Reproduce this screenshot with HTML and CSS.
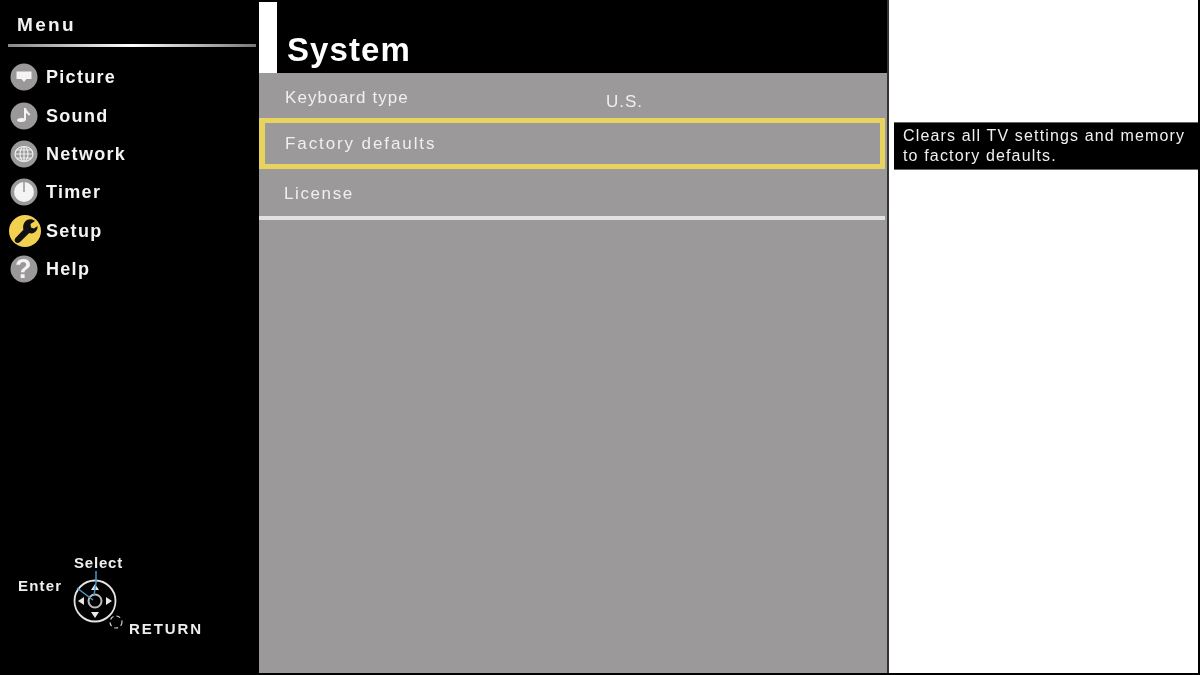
FILE: index.html
```html
<!DOCTYPE html>
<html lang="en">
<head>
  <meta charset="UTF-8">
  <title>Menu - System</title>
  <link rel="stylesheet" href="styles.css">
</head>
<body>

  <aside class="sidebar">
    <h2 class="menu-title">Menu</h2>
    <div class="menu-rule"></div>

    <nav class="menu">
      <div class="menu-item">
        <svg class="menu-icon" viewBox="0 0 34 34">
          <circle class="disc" cx="16" cy="17" r="13.5"/>
          <path class="glyph" d="M8.500 11.500h15v7.500h-5l-2.500 3-2.500-3h-5z"/>
        </svg>
        <span>Picture</span>
      </div>
      <div class="menu-item">
        <svg class="menu-icon" viewBox="0 0 34 34">
          <circle class="disc" cx="16" cy="17" r="13.500"/>
          <path class="glyph" d="M16 9h2c.4 2.500 2.500 4 4.500 6.500l-1.500 1.200c-1-1.300-2-2.200-3-2.700v6.500c0 1.600-2 2.500-4.300 2.500-2.300 0-4.700-.5-4.700-1.800s2.300-2.200 4.700-2.200c.9 0 1.700.1 2.300.4z"/>
        </svg>
        <span>Sound</span>
      </div>
      <div class="menu-item">
        <svg class="menu-icon" viewBox="0 0 34 34">
          <circle class="disc" cx="16" cy="17" r="13.500"/>
          <ellipse class="line" cx="16" cy="17" rx="9" ry="7.500"/>
          <ellipse class="line" cx="16" cy="17" rx="4" ry="7.500"/>
          <path class="line" d="M16 9.500v15M7 17h18M8.500 13h15M8.500 21h15"/>
        </svg>
        <span>Network</span>
      </div>
      <div class="menu-item">
        <svg class="menu-icon" viewBox="0 0 34 34">
          <circle class="disc" cx="16" cy="17" r="13.500"/>
          <circle class="glyph" cx="16" cy="17" r="10"/>
          <path class="hand" d="M16 7v10"/>
        </svg>
        <span>Timer</span>
      </div>
      <div class="menu-item current">
        <svg class="menu-icon" viewBox="0 0 34 34">
          <circle class="disc-on" cx="17" cy="17" r="16"/>
          <path class="wrench" d="M19 6c3-1.200 6-.6 8 1l-4.500 3 .5 3.500 3 1 3.500-2.500c.4 3-1 5.500-3.500 6.800-1.600.8-3.300.8-4.800.3L12 28c-1.500 1.300-3.500 1.200-4.600 0-1.100-1.300-1-3 .3-4.300l7.700-8c-.9-4 .6-8 3.600-9.700z"/>
        </svg>
        <span>Setup</span>
      </div>
      <div class="menu-item">
        <svg class="menu-icon" viewBox="0 0 34 34">
          <circle class="disc" cx="16" cy="17" r="13.500"/>
          <text class="help-mark" x="16" y="26" text-anchor="middle">?</text>
        </svg>
        <span>Help</span>
      </div>
    </nav>

    <svg class="remote-keys" viewBox="0 0 258 125" width="258" height="125">
      <!-- pointer lines from the labels -->
      <circle class="key" cx="95" cy="51" r="20.500"/>
      <circle class="key-center" cx="95" cy="51" r="6.500"/>
      <path class="arrow" d="M95 34l4 6h-8zM95 68l4-6h-8zM78 51l6-4v8zM112 51l-6-4v8z"/>
      <path class="pointer" d="M96 21v12l-2 12M77 38l16 12"/>
      <circle class="key-dash" cx="116" cy="72" r="6"/>
      <text class="key-label" x="74" y="18">Select</text>
      <text class="key-label key-enter" x="18" y="41">Enter</text>
      <text class="key-label key-return" x="129" y="84">RETURN</text>
    </svg>
  </aside>

  <main class="content">
    <header class="title-bar">
      <div class="title-mark"></div>
      <h1>System</h1>
    </header>

    <div class="rows">
      <div class="row row-first">
        <span class="row-name">Keyboard type</span>
        <span class="row-value">U.S.</span>
      </div>
      <div class="row row-focus">
        <span class="row-name">Factory defaults</span>
      </div>
      <div class="row row-last">
        <span class="row-name">License</span>
      </div>
    </div>
  </main>

  <section class="help-pane">
    <p class="help-text">Clears all TV settings and memory<br>to factory defaults.</p>
  </section>

</body>
</html>
```

FILE: styles.css
```css
body {
  margin: 0;
  width: 1200px;
  height: 675px;
  overflow: hidden;
  box-sizing: border-box;
  display: grid;
  grid-template-columns: 259px 630px 1fr;
  background-color: #000;
  color: #fff;
  font-family: "Liberation Sans", Arial, sans-serif;
  border-right: 2px solid #000;
  border-bottom: 2px solid #000;
}

/* the source is a soft, upscaled TV capture */
.sidebar,
.content,
.help-pane {
  filter: blur(0.35px);
}

/* left menu */
.sidebar {
  display: flex;
  flex-direction: column;
  background-color: #000;
}

.menu-title {
  margin: 0;
  padding: 15px 0 0 17px;
  height: 28px;
  font-size: 19px;
  line-height: 20px;
  font-weight: bold;
  letter-spacing: 2.3px;
  color: #f2f2f2;
}

.menu-rule {
  margin: 1px 3px 0 8px;
  height: 3px;
  background: linear-gradient(to right, #888, #fff 50%, #777);
}

.menu {
  margin-top: 11px;
}

.menu-item {
  display: flex;
  align-items: center;
  gap: 4px;
  height: 38.4px;
  padding-left: 8px;
  font-size: 18px;
  font-weight: bold;
  letter-spacing: 1.3px;
  color: #f4f4f4;
}

.menu-item span {
  padding-top: 1px;
}

.menu-icon {
  width: 34px;
  height: 34px;
  flex-shrink: 0;
}

.disc {
  fill: #9a9898;
}

.disc-on {
  fill: #f2d050;
}

.glyph {
  fill: #f4f4f4;
}

.line {
  fill: none;
  stroke: #eee;
  stroke-width: 1.2;
}

.hand {
  fill: none;
  stroke: #9a9898;
  stroke-width: 1.500;
}

.wrench {
  fill: #111;
}

.help-mark {
  font-size: 27px;
  font-weight: bold;
  fill: #f4f4f4;
}

.remote-keys {
  margin-top: auto;
  margin-bottom: -1.500px;
  display: block;
}

.pointer {
  fill: none;
  stroke: #4a96c8;
  stroke-width: 1.5;
}

.key {
  fill: none;
  stroke: #e4e4e4;
  stroke-width: 1.8;
}

.key-center {
  fill: none;
  stroke: #bbb;
  stroke-width: 2;
}

.key-dash {
  fill: none;
  stroke: #ccc;
  stroke-width: 1.2;
  stroke-dasharray: 4 3;
}

.arrow {
  fill: #e8e8e8;
}

.key-label {
  font-size: 15px;
  font-weight: bold;
  letter-spacing: 0.8px;
  fill: #eee;
}

.key-enter {
  letter-spacing: 1.2px;
}

.key-return {
  letter-spacing: 1.9px;
}

/* middle list */
.content {
  display: flex;
  flex-direction: column;
  background-color: #9b9999;
  border-right: 2px solid #333;
}

.title-bar {
  height: 73px;
  flex-shrink: 0;
  box-sizing: border-box;
  padding-top: 2px;
  display: flex;
  gap: 10px;
  background-color: #000;
}

.title-mark {
  width: 18px;
  background-color: #fff;
}

.title-bar h1 {
  margin: 31px 0 0;
  font-size: 33px;
  line-height: 34px;
  font-weight: bold;
  letter-spacing: 1.1px;
}

.rows {
  display: flex;
  flex-direction: column;
  margin-right: 2px;
  font-size: 17px;
  letter-spacing: 1.6px;
  color: #f0f0f0;
}

.row {
  display: flex;
  box-sizing: border-box;
  padding-left: 26px;
}

.row-name {
  width: 321px;
}

.row-first {
  height: 45px;
  padding-top: 15px;
  letter-spacing: 1.1px;
}

.row-value {
  padding-top: 4px;
  letter-spacing: 1px;
}

.row-focus {
  height: 51px;
  padding: 11px 0 0 20px;
  border: 5px solid #e8d35e;
  border-left-width: 6px;
  letter-spacing: 1.9px;
}

.row-last {
  height: 51px;
  padding: 15px 0 0 25px;
  border-bottom: 4px solid #e2e2e2;
}

/* right help text */
.help-pane {
  background-color: #fff;
  padding: 122px 0 0 5px;
}

.help-text {
  margin: 0;
  height: 48px;
  box-sizing: border-box;
  padding: 3px 0 0 9px;
  background-color: #000;
  border-top: 1px solid #666;
  border-bottom: 1px solid #666;
  font-size: 16px;
  line-height: 20px;
  letter-spacing: 1.15px;
  color: #f0f0f0;
}
```
